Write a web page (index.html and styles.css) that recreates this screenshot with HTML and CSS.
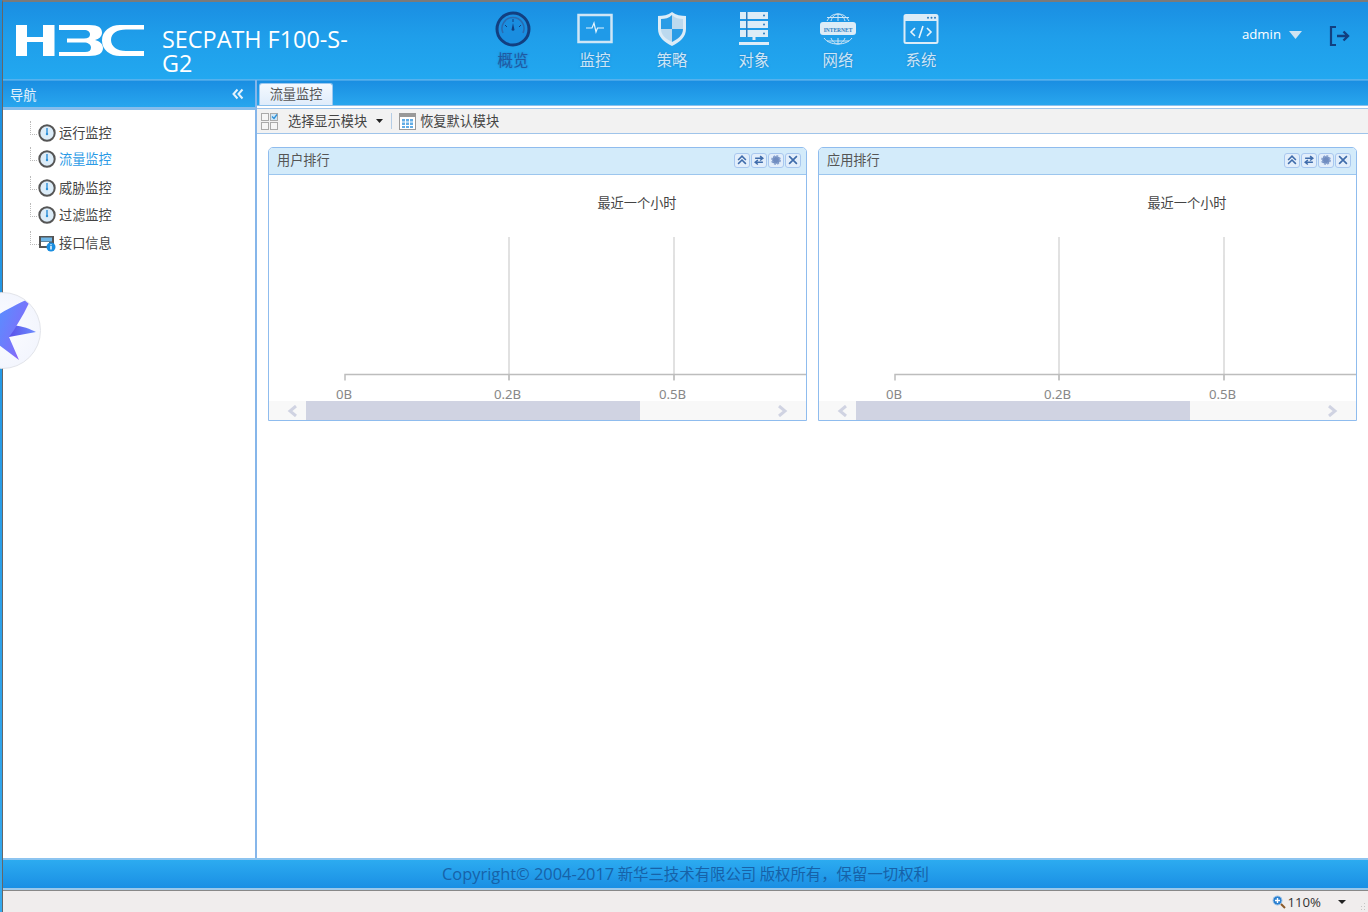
FILE: index.html
```html
<!DOCTYPE html>
<html lang="zh">
<head>
<meta charset="utf-8">
<title>H3C SecPath</title>
<link rel="stylesheet" href="styles.css">
</head>
<body>
<div class="frame">
  <header class="top">
    <svg class="logo" width="130" height="33" viewBox="0 0 130 33">
      <path fill="#fff" d="M1 1h11v12h16V1h11.500v31H28V18H12v14H1z"/>
      <path fill="#fff" d="M44 1h30c10 0 13 3 13 7.500 0 4-3 6.500-7 7.500 4 1 8 3.500 8 8 0 5-4 8-14 8H44v-4h26c4 0 6-1.500 6-4.500s-3-5-7-5H52v-4h17c4 0 6-1.500 6-4s-2-4.500-6-4.500H44z"/>
      <path fill="#fff" d="M129 1v4.500h-18c-9 0-15 4-15 10.500s6 11 15 11h18v5h-24c-10 0-18-6-18-15.500S95 1 105 1z"/>
    </svg>
    <div class="model">SECPATH F100-S-G2</div>
    <nav class="mainnav">
      <a class="nav-item is-active">
        <svg width="36" height="36" viewBox="0 0 36 36"><circle cx="18" cy="18" r="16" fill="#1a8ee0" stroke="#123f80" stroke-width="3"/><path d="M8 22a11 11 0 1 1 20 0" fill="none" stroke="#2a6ab0" stroke-width="1.500"/><path d="M18 8v3M10 14l2 2M26 14l-2 2" stroke="#123f80"/><path d="M18 12l-1.500 7a1.800 1.800 0 0 0 3 0z" fill="#123f80"/></svg>
        <span>概览</span>
      </a>
      <a class="nav-item">
        <svg width="36" height="36" viewBox="0 0 36 36"><rect x="1.500" y="4" width="33" height="27" fill="#1f9ae8" stroke="#cfe6f6" stroke-width="2.500"/><path d="M9 17h6l2-5 2 9 1.500-4H27" fill="none" stroke="#e6f4fc" stroke-width="1.200"/></svg>
        <span>监控</span>
      </a>
      <a class="nav-item">
        <svg width="32" height="36" viewBox="0 0 32 36"><path d="M16 1c4 3 9 4 14 4v13c0 8-6 13-14 17C8 31 2 26 2 18V5c5 0 10-1 14-4z" fill="#dcecf7"/><path d="M16 4v14H5v-10c4 0 8-1 11-4z" fill="#2a9ce6"/><path d="M16 18h11c0 6-5 10-11 13z" fill="#2a9ce6"/><path d="M16 18h11V8c-4 0-8-1-11-4zM16 18H5c0 6 5 10 11 13z" fill="#bcd9ee"/></svg>
        <span>策略</span>
      </a>
      <a class="nav-item">
        <svg width="32" height="36" viewBox="0 0 32 36"><g fill="#dcecf7"><rect x="2" y="1" width="28" height="7"/><rect x="2" y="10" width="28" height="7"/><rect x="2" y="19" width="28" height="7"/><path d="M14.500 26h3v3H14.500zM1 31h30v3H1z"/></g><g fill="#2a7cc0"><path d="M8 1h1.500v25H8z"/><circle cx="26" cy="4.500" r="1"/><circle cx="26" cy="13.500" r="1"/><circle cx="26" cy="22.500" r="1"/></g></svg>
        <span>对象</span>
      </a>
      <a class="nav-item">
        <svg width="38" height="34" viewBox="0 0 38 34"><g fill="none" stroke="#cfe6f6"><path d="M8 9C11 4 14 2 19 2s8 2 11 7M12 9c1-4 4-7 7-7s6 3 7 7M19 2v7M5 26c3 4 8 6 14 6s11-2 14-6M12 26c1 3 4 6 7 6s6-3 7-6M19 26v6M8 5.500h22M8 29h22"/></g><rect x="1" y="10" width="36" height="13" rx="3" fill="#dcecf7"/><text x="19" y="19.500" text-anchor="middle" class="inet">INTERNET</text></svg>
        <span>网络</span>
      </a>
      <a class="nav-item">
        <svg width="36" height="32" viewBox="0 0 36 32"><rect x="1.500" y="2" width="33" height="28" rx="1.500" fill="#1f9ae8" stroke="#dcecf7" stroke-width="2"/><path d="M1 2h34v6H1z" fill="#dcecf7"/><g fill="#2a7cc0"><circle cx="25" cy="4.800" r="1"/><circle cx="28.500" cy="4.800" r="1"/><circle cx="32" cy="4.800" r="1"/></g><path d="M12 15l-4 4 4 4M24 15l4 4-4 4M20 13l-4 12" fill="none" stroke="#e6f4fc" stroke-width="1.600"/></svg>
        <span>系统</span>
      </a>
    </nav>
    <div class="user">
      <span class="user-name">admin</span>
      <svg class="user-arrow" width="13" height="8" viewBox="0 0 13 8"><path d="M0 0h13L6.500 8z" fill="#cfe3f1"/></svg>
      <svg class="logout" width="22" height="22" viewBox="0 0 22 22"><path d="M7 2H2v18h5" fill="none" stroke="#123f80" stroke-width="2.200"/><path d="M8 11h11M14.500 6.500L19 11l-4.500 4.500" fill="none" stroke="#123f80" stroke-width="2.400"/></svg>
    </div>
  </header>

  <div class="workspace">
    <aside class="side">
      <div class="side-head">
        <span>导航</span>
        <svg width="12" height="12" viewBox="0 0 12 12"><path d="M5.500 1.500L1.500 6l4 4.500M10.500 1.500L6.500 6l4 4.500" fill="none" stroke="#e4f2fb" stroke-width="2"/></svg>
      </div>
      <ul class="tree">
        <li class="tree-item h26"><svg class="gauge" width="18" height="18" viewBox="0 0 18 18"><circle cx="9" cy="9" r="7.700" fill="#dcecf8" stroke="#555" stroke-width="2"/><path d="M9 4v5" stroke="#2b8fd8" stroke-width="1.400"/><circle cx="9" cy="10" r="1.200" fill="#2b8fd8"/></svg><span>运行监控</span></li>
        <li class="tree-item h29 is-current"><svg class="gauge" width="18" height="18" viewBox="0 0 18 18"><circle cx="9" cy="9" r="7.700" fill="#dcecf8" stroke="#555" stroke-width="2"/><path d="M9 4v5" stroke="#2b8fd8" stroke-width="1.400"/><circle cx="9" cy="10" r="1.200" fill="#2b8fd8"/></svg><span>流量监控</span></li>
        <li class="tree-item h27"><svg class="gauge" width="18" height="18" viewBox="0 0 18 18"><circle cx="9" cy="9" r="7.700" fill="#dcecf8" stroke="#555" stroke-width="2"/><path d="M9 4v5" stroke="#2b8fd8" stroke-width="1.400"/><circle cx="9" cy="10" r="1.200" fill="#2b8fd8"/></svg><span>威胁监控</span></li>
        <li class="tree-item h28"><svg class="gauge" width="18" height="18" viewBox="0 0 18 18"><circle cx="9" cy="9" r="7.700" fill="#dcecf8" stroke="#555" stroke-width="2"/><path d="M9 4v5" stroke="#2b8fd8" stroke-width="1.400"/><circle cx="9" cy="10" r="1.200" fill="#2b8fd8"/></svg><span>过滤监控</span></li>
        <li class="tree-item h26"><svg class="gauge" width="18" height="18" viewBox="0 0 18 18"><rect x="1" y="2" width="15" height="12" fill="#555"/><rect x="3" y="3.500" width="11" height="4" fill="#6fb7e8"/><rect x="3" y="8" width="8" height="4" fill="#fff"/><circle cx="13" cy="13" r="4.500" fill="#1a8ee0"/><path d="M13 12v3.500M13 10.200v1" stroke="#fff" stroke-width="1.400"/></svg><span>接口信息</span></li>
      </ul>
    </aside>

    <main class="content">
      <div class="tabbar"><div class="tab">流量监控</div></div>
      <div class="toolbar">
        <svg class="tool-ico" width="17" height="17" viewBox="0 0 17 17"><g fill="#f6f6f6" stroke="#aaa"><rect x=".5" y=".5" width="7" height="7"/><rect x=".5" y="9.500" width="7" height="7"/><rect x="9.500" y="9.500" width="7" height="7"/><rect x="9.500" y=".5" width="7" height="7" fill="#cfe6f6"/></g><path d="M11 3.500l2 2 3-4" fill="none" stroke="#2b8fd8" stroke-width="1.300"/></svg>
        <span class="tool-text first">选择显示模块</span>
        <svg class="tool-caret" width="7" height="4" viewBox="0 0 7 4"><path d="M0 0h7L3.500 4z" fill="#222"/></svg>
        <i class="tool-sep"></i>
        <svg class="tool-ico" width="17" height="17" viewBox="0 0 17 17"><rect x=".5" y=".5" width="16" height="16" fill="#fff" stroke="#999"/><rect x="1" y="1" width="15" height="3" fill="#999"/><g fill="#62ade6"><rect x="3" y="6" width="3" height="2.500"/><rect x="7" y="6" width="3" height="2.500"/><rect x="11" y="6" width="3" height="2.500"/><rect x="3" y="9.500" width="3" height="2.500"/><rect x="7" y="9.500" width="3" height="2.500"/><rect x="11" y="9.500" width="3" height="2.500"/><rect x="3" y="13" width="3" height="2"/><rect x="7" y="13" width="3" height="2"/><rect x="11" y="13" width="3" height="2"/></g></svg>
        <span class="tool-text">恢复默认模块</span>
      </div>
      <div class="panels">
        <section class="panel">
          <div class="panel-head">
            <span>用户排行</span>
            <div class="panel-tools">
              <b class="pbtn"><svg width="10" height="10" viewBox="0 0 9 9"><path d="M1 4.500L4.500 1 8 4.500M1 8l3.500-3.500L8 8" fill="none" stroke="#3f6cab" stroke-width="1.400"/></svg></b>
              <b class="pbtn"><svg width="10" height="10" viewBox="0 0 9 9"><path d="M1 3h6M5.500 1L8 3 5.500 5M8 6.500H2M3.500 4.500L1 6.500l2.500 2" fill="none" stroke="#3f6cab" stroke-width="1.300"/></svg></b>
              <b class="pbtn"><svg width="12" height="12" viewBox="0 0 10 10"><circle cx="5" cy="5" r="3.200" fill="#6f8cc0" stroke="#8aa3cf" stroke-width="1.800" stroke-dasharray="1.500 1"/></svg></b>
              <b class="pbtn"><svg width="10" height="10" viewBox="0 0 9 9"><path d="M1 1l7 7M8 1L1 8" stroke="#3f6cab" stroke-width="1.500"/></svg></b>
            </div>
          </div>
          <svg class="chart" width="537" height="226" viewBox="0 0 537 226">
            <text class="chart-title" x="368" y="33" text-anchor="middle">最近一个小时</text>
            <path class="grid" d="M240 62v143M405 62v143"/>
            <path class="axis" d="M76 205.500V199.500H537M240 199.500v6M405 199.500v6"/>
            <text class="chart-label" x="75" y="224" text-anchor="middle">0B</text>
            <text class="chart-label" x="238.500" y="224" text-anchor="middle">0.2B</text>
            <text class="chart-label" x="403.500" y="224" text-anchor="middle">0.5B</text>
          </svg>
          <div class="hscroll">
            <svg class="harrow" width="12" height="12" viewBox="0 0 12 12"><path d="M9 1L3 6l6 5" fill="none" stroke="#d0d3e2" stroke-width="3"/></svg>
            <div class="hthumb"></div>
            <svg class="harrow" width="12" height="12" viewBox="0 0 12 12"><path d="M3 1l6 5-6 5" fill="none" stroke="#d0d3e2" stroke-width="3"/></svg>
          </div>
        </section>
        <section class="panel">
          <div class="panel-head">
            <span>应用排行</span>
            <div class="panel-tools">
              <b class="pbtn"><svg width="10" height="10" viewBox="0 0 9 9"><path d="M1 4.500L4.500 1 8 4.500M1 8l3.500-3.500L8 8" fill="none" stroke="#3f6cab" stroke-width="1.400"/></svg></b>
              <b class="pbtn"><svg width="10" height="10" viewBox="0 0 9 9"><path d="M1 3h6M5.500 1L8 3 5.500 5M8 6.500H2M3.500 4.500L1 6.500l2.500 2" fill="none" stroke="#3f6cab" stroke-width="1.300"/></svg></b>
              <b class="pbtn"><svg width="12" height="12" viewBox="0 0 10 10"><circle cx="5" cy="5" r="3.200" fill="#6f8cc0" stroke="#8aa3cf" stroke-width="1.800" stroke-dasharray="1.500 1"/></svg></b>
              <b class="pbtn"><svg width="10" height="10" viewBox="0 0 9 9"><path d="M1 1l7 7M8 1L1 8" stroke="#3f6cab" stroke-width="1.500"/></svg></b>
            </div>
          </div>
          <svg class="chart" width="537" height="226" viewBox="0 0 537 226">
            <text class="chart-title" x="368" y="33" text-anchor="middle">最近一个小时</text>
            <path class="grid" d="M240 62v143M405 62v143"/>
            <path class="axis" d="M76 205.500V199.500H537M240 199.500v6M405 199.500v6"/>
            <text class="chart-label" x="75" y="224" text-anchor="middle">0B</text>
            <text class="chart-label" x="238.500" y="224" text-anchor="middle">0.2B</text>
            <text class="chart-label" x="403.500" y="224" text-anchor="middle">0.5B</text>
          </svg>
          <div class="hscroll">
            <svg class="harrow" width="12" height="12" viewBox="0 0 12 12"><path d="M9 1L3 6l6 5" fill="none" stroke="#d0d3e2" stroke-width="3"/></svg>
            <div class="hthumb"></div>
            <svg class="harrow" width="12" height="12" viewBox="0 0 12 12"><path d="M3 1l6 5-6 5" fill="none" stroke="#d0d3e2" stroke-width="3"/></svg>
          </div>
        </section>
      </div>
    </main>
  </div>

  <footer class="foot"><span class="foot-latin">Copyright© 2004-2017</span> 新华三技术有限公司 版权所有，保留一切权利</footer>
  <div class="status">
    <svg width="14" height="14" viewBox="0 0 14 14"><circle cx="5.500" cy="5.500" r="4.500" fill="#2a7fd0" stroke="#9cc4e8"/><path d="M3 5.500h5M5.500 3v5" stroke="#fff" stroke-width="1.400"/><path d="M9 9l4 4" stroke="#8a5a2a" stroke-width="2"/></svg>
    <span class="zoom-val">110%</span>
    <svg class="zoom-caret" width="8" height="4" viewBox="0 0 8 4"><path d="M0 0h8L4 4z" fill="#222"/></svg>
    <svg class="grip" width="6" height="8" viewBox="0 0 6 8"><path d="M4 1h1v1H4zM4 4h1v1H4zM4 7h1v1H4zM1 4h1v1H1zM1 7h1v1H1z" fill="#c5c5c5"/></svg>
  </div>
</div>

<div class="float-badge">
  <svg width="44" height="76" viewBox="0 0 44 76">
    <defs>
      <linearGradient id="wing" x1="0" y1=".3" x2="1" y2=".8"><stop offset="0" stop-color="#4f97ff"/><stop offset=".7" stop-color="#7a72fb"/><stop offset="1" stop-color="#a24ff0"/></linearGradient>
      <linearGradient id="fin" x1="0" y1="0" x2="1" y2="0"><stop offset="0" stop-color="#5a50e8"/><stop offset="1" stop-color="#6c8cff"/></linearGradient>
    </defs>
    <path d="M14 33C22 31 34 36 40 39L13 44z" fill="url(#fin)"/>
    <path d="M-10 30C6 18 24 10 36 4L28 20 18 37 13 44l10 23L3 52-10 46z" fill="url(#wing)"/>
  </svg>
</div>
</body>
</html>
```
FILE: styles.css
```css
* { box-sizing: border-box; }
html, body { margin: 0; height: 100%; }
body {
  font-family: "Noto Sans CJK SC", "Noto Sans", sans-serif;
  font-size: 13.2px;
  color: #444;
  background: #fff;
  overflow: hidden;
  position: relative;
}
.frame {
  height: 912px;
  border-top: 2px solid #7a7a7a;
  margin-left: 2px;
  border-left: 1px solid #666;
  display: flex;
  flex-direction: column;
}
body::before {
  content: "";
  position: absolute;
  left: 0;
  top: 0;
  width: 2px;
  height: 100%;
  background: linear-gradient(#1a8ee0, #35a9ee);
}
.top {
  height: 78px;
  flex: none;
  display: flex;
  background: linear-gradient(#1a8ee2 0, #1f9eea 45%, #22a8f0 100%);
  color: #fff;
  position: relative;
  border-bottom: 1px solid #55b2ee;
}
.logo { margin: 22px 0 0 12px; flex: none; }
.model {
  width: 200px;
  margin: 25px 0 0 17px;
  font: 23.4px/24px "Open Sans", sans-serif;
  flex: none;
}
.mainnav {
  display: grid;
  grid-template-columns: 82px 82px 72px 92px 76px 90px;
  margin-left: 110px;
  height: 76px;
  flex: none;
}
.nav-item {
  display: flex;
  flex-direction: column;
  align-items: center;
  padding-top: 9px;
  color: #cde6f7;
  font-size: 15.4px;
  line-height: 20px;
}
.nav-item svg { height: 36px; flex: none; }
.nav-item span { margin-top: 2px; text-shadow: 0 0 2px rgba(30, 90, 160, .55); }
.nav-item.is-active { color: #1f5aa3; }
.inet { font: 700 5.500px "Liberation Serif", serif; fill: #2a7cc0; }
.user {
  margin-left: auto;
  display: flex;
  align-items: flex-start;
  padding-top: 23px;
}
.user-name { font: 13.2px/18px "Open Sans", sans-serif; }
.user-arrow { margin: 6px 0 0 8px; }
.logout { margin: 0 17px 0 27px; }

.workspace { flex: 1; display: flex; min-height: 0; }
.side {
  width: 252px;
  flex: none;
  display: flex;
  flex-direction: column;
}
.side-head {
  height: 30px;
  flex: none;
  display: flex;
  align-items: center;
  justify-content: space-between;
  padding: 0 11px 0 7px;
  color: #e8f4fc;
  background: linear-gradient(#1a8ee2, #28a6ee);
  border-bottom: 3px solid #86bdec;
  border-top: 1px solid #45a5e8;
}
.tree { list-style: none; margin: 0; padding: 10px 0 0 35px; }
.tree-item {
  display: flex;
  align-items: flex-start;
  position: relative;
  line-height: 26px;
}
.tree-item.h26 { height: 26px; }
.tree-item.h27 { height: 27px; }
.tree-item.h28 { height: 28px; }
.tree-item.h29 { height: 29px; }
.tree-item::before {
  content: "";
  position: absolute;
  left: -8px;
  top: 1px;
  width: 8px;
  height: 13px;
  border-left: 1px dotted #bbb;
  border-bottom: 1px dotted #bbb;
}
.gauge { flex: none; margin: 4px 3px 0 0; }
.is-current { color: #2a9ae6; }

.content {
  flex: 1;
  min-width: 0;
  border-left: 2px solid #86b6ea;
  display: flex;
  flex-direction: column;
}
.tabbar {
  height: 26px;
  flex: none;
  padding: 2px 0 0 2px;
  background: linear-gradient(#1a8ee2, #28a6ee);
  border-top: 1px solid #45a5e8;
  border-bottom: 1px solid #8cc0ec;
}
.tab {
  width: 74px;
  height: 22px;
  background: linear-gradient(#f4f9fe, #dfecfb);
  border: 1px solid #9cc8f0;
  border-bottom: 0;
  border-radius: 3px 3px 0 0;
  text-align: center;
  line-height: 20px;
  color: #555;
}
.toolbar {
  height: 26px;
  flex: none;
  display: flex;
  align-items: center;
  padding-left: 4px;
  background: #f2f2f2;
  border-top: 1px solid #9fc4ea;
  border-bottom: 1px solid #9fc4ea;
  margin-top: 2px;
}
.tool-text { margin-left: 4px; padding-bottom: 2px; }
.tool-text.first { margin-left: 10px; }
.tool-caret { margin-left: 9px; }
.tool-sep { width: 1px; height: 16px; background: #b4cde6; margin: 0 7px 0 8px; }
.panels {
  display: grid;
  grid-template-columns: 539px 539px;
  gap: 11px;
  padding: 13px 0 0 11px;
}
.panel {
  border: 1px solid #8fbcee;
  border-radius: 5px 5px 0 0;
  height: 274px;
  display: flex;
  flex-direction: column;
  overflow: hidden;
}
.panel-head {
  height: 27px;
  flex: none;
  background: #d3ebfa;
  border-bottom: 1px solid #9cc6ee;
  display: flex;
  align-items: center;
  justify-content: space-between;
  padding: 0 5px 2px 8px;
  color: #555;
}
.panel-head span { padding-bottom: 2px; }
.panel-tools { display: flex; gap: 1px; }
.pbtn {
  width: 16px;
  height: 15px;
  display: flex;
  align-items: center;
  justify-content: center;
  background: #e2eefb;
  border: 1px solid #a9c8ef;
  border-radius: 3px;
}
.chart { display: block; flex: none; height: 226px; overflow: visible; }
.chart-title { font-size: 13.2px; fill: #444; }
.chart-label { font-size: 13.2px; fill: #888; font-family: "Noto Sans", sans-serif; }
.grid { stroke: #d8d8d8; stroke-width: 1.500; fill: none; }
.axis { stroke: #bdbdbd; stroke-width: 1.500; fill: none; }
.hscroll {
  flex: 1;
  display: flex;
  align-items: center;
  background: #f8f8f8;
}
.harrow { flex: none; }
.harrow:first-child { margin-left: 18px; }
.harrow:last-child { margin-left: 136px; }
.hthumb { width: 334px; height: 100%; background: #d0d3e2; margin-left: 7px; }

.foot {
  height: 32px;
  flex: none;
  background: linear-gradient(#2cabf0, #1a8fe4);
  border-top: 2px solid #8cc4f0;
  border-bottom: 2px solid #9cc8ea;
  text-align: center;
  color: #1762a8;
  font-size: 15.4px;
  line-height: 26px;
}
.foot-latin { font: 16.4px "Open Sans", sans-serif; }
.status {
  height: 22px;
  flex: none;
  display: flex;
  align-items: center;
  justify-content: flex-end;
  background: #f0eded;
  border-top: 1px solid #888;
  color: #333;
  padding-right: 2px;
}
.zoom-val { font: 13.2px "Open Sans", sans-serif; margin-left: 1px; }
.zoom-caret { margin-left: 17px; }
.grip { margin-left: 14px; align-self: flex-end; margin-bottom: 2px; }

.float-badge {
  position: absolute;
  left: -36px;
  top: 292px;
  width: 77px;
  height: 77px;
  border-radius: 50%;
  background: radial-gradient(circle, #fbfcff, #f0f3fd);
  border: 1px solid #e2e4ea;
  overflow: hidden;
  display: flex;
  justify-content: flex-end;
}
```
